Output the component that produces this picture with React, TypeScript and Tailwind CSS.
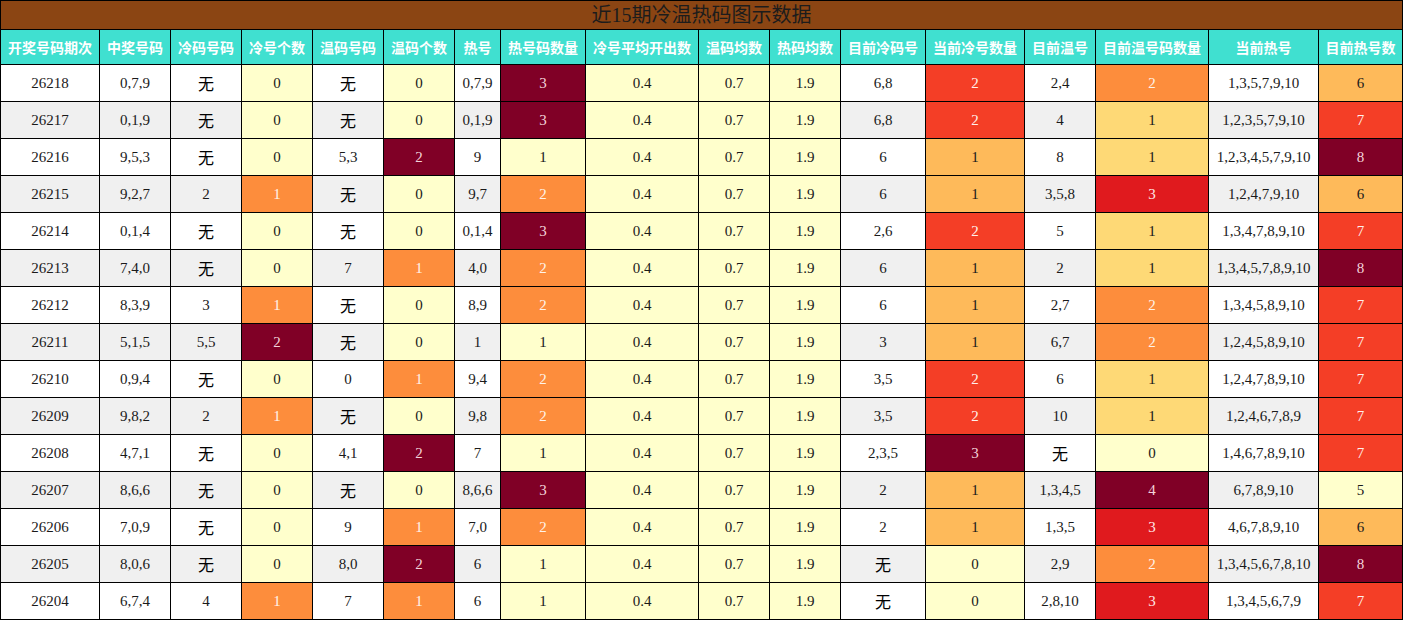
import React from 'react';

// 近15期冷温热码图示数据 — heat table

type Row = {
  issue: string;
  win: string;
  cold: string;
  coldCnt: number;
  warm: string;
  warmCnt: number;
  hot: string;
  hotCnt: number;
  curCold: string;
  curColdCnt: number;
  curWarm: string;
  curWarmCnt: number;
  curHot: string;
  curHotCnt: number;
};

const rows: Row[] = [
  { issue: '26218', win: '0,7,9', cold: '无', coldCnt: 0, warm: '无', warmCnt: 0, hot: '0,7,9', hotCnt: 3, curCold: '6,8', curColdCnt: 2, curWarm: '2,4', curWarmCnt: 2, curHot: '1,3,5,7,9,10', curHotCnt: 6 },
  { issue: '26217', win: '0,1,9', cold: '无', coldCnt: 0, warm: '无', warmCnt: 0, hot: '0,1,9', hotCnt: 3, curCold: '6,8', curColdCnt: 2, curWarm: '4', curWarmCnt: 1, curHot: '1,2,3,5,7,9,10', curHotCnt: 7 },
  { issue: '26216', win: '9,5,3', cold: '无', coldCnt: 0, warm: '5,3', warmCnt: 2, hot: '9', hotCnt: 1, curCold: '6', curColdCnt: 1, curWarm: '8', curWarmCnt: 1, curHot: '1,2,3,4,5,7,9,10', curHotCnt: 8 },
  { issue: '26215', win: '9,2,7', cold: '2', coldCnt: 1, warm: '无', warmCnt: 0, hot: '9,7', hotCnt: 2, curCold: '6', curColdCnt: 1, curWarm: '3,5,8', curWarmCnt: 3, curHot: '1,2,4,7,9,10', curHotCnt: 6 },
  { issue: '26214', win: '0,1,4', cold: '无', coldCnt: 0, warm: '无', warmCnt: 0, hot: '0,1,4', hotCnt: 3, curCold: '2,6', curColdCnt: 2, curWarm: '5', curWarmCnt: 1, curHot: '1,3,4,7,8,9,10', curHotCnt: 7 },
  { issue: '26213', win: '7,4,0', cold: '无', coldCnt: 0, warm: '7', warmCnt: 1, hot: '4,0', hotCnt: 2, curCold: '6', curColdCnt: 1, curWarm: '2', curWarmCnt: 1, curHot: '1,3,4,5,7,8,9,10', curHotCnt: 8 },
  { issue: '26212', win: '8,3,9', cold: '3', coldCnt: 1, warm: '无', warmCnt: 0, hot: '8,9', hotCnt: 2, curCold: '6', curColdCnt: 1, curWarm: '2,7', curWarmCnt: 2, curHot: '1,3,4,5,8,9,10', curHotCnt: 7 },
  { issue: '26211', win: '5,1,5', cold: '5,5', coldCnt: 2, warm: '无', warmCnt: 0, hot: '1', hotCnt: 1, curCold: '3', curColdCnt: 1, curWarm: '6,7', curWarmCnt: 2, curHot: '1,2,4,5,8,9,10', curHotCnt: 7 },
  { issue: '26210', win: '0,9,4', cold: '无', coldCnt: 0, warm: '0', warmCnt: 1, hot: '9,4', hotCnt: 2, curCold: '3,5', curColdCnt: 2, curWarm: '6', curWarmCnt: 1, curHot: '1,2,4,7,8,9,10', curHotCnt: 7 },
  { issue: '26209', win: '9,8,2', cold: '2', coldCnt: 1, warm: '无', warmCnt: 0, hot: '9,8', hotCnt: 2, curCold: '3,5', curColdCnt: 2, curWarm: '10', curWarmCnt: 1, curHot: '1,2,4,6,7,8,9', curHotCnt: 7 },
  { issue: '26208', win: '4,7,1', cold: '无', coldCnt: 0, warm: '4,1', warmCnt: 2, hot: '7', hotCnt: 1, curCold: '2,3,5', curColdCnt: 3, curWarm: '无', curWarmCnt: 0, curHot: '1,4,6,7,8,9,10', curHotCnt: 7 },
  { issue: '26207', win: '8,6,6', cold: '无', coldCnt: 0, warm: '无', warmCnt: 0, hot: '8,6,6', hotCnt: 3, curCold: '2', curColdCnt: 1, curWarm: '1,3,4,5', curWarmCnt: 4, curHot: '6,7,8,9,10', curHotCnt: 5 },
  { issue: '26206', win: '7,0,9', cold: '无', coldCnt: 0, warm: '9', warmCnt: 1, hot: '7,0', hotCnt: 2, curCold: '2', curColdCnt: 1, curWarm: '1,3,5', curWarmCnt: 3, curHot: '4,6,7,8,9,10', curHotCnt: 6 },
  { issue: '26205', win: '8,0,6', cold: '无', coldCnt: 0, warm: '8,0', warmCnt: 2, hot: '6', hotCnt: 1, curCold: '无', curColdCnt: 0, curWarm: '2,9', curWarmCnt: 2, curHot: '1,3,4,5,6,7,8,10', curHotCnt: 8 },
  { issue: '26204', win: '6,7,4', cold: '4', coldCnt: 1, warm: '7', warmCnt: 1, hot: '6', hotCnt: 1, curCold: '无', curColdCnt: 0, curWarm: '2,8,10', curWarmCnt: 3, curHot: '1,3,4,5,6,7,9', curHotCnt: 7 },
];

const headers = ['开奖号码期次', '中奖号码', '冷码号码', '冷号个数', '温码号码', '温码个数', '热号', '热号码数量', '冷号平均开出数', '温码均数', '热码均数', '目前冷码号', '当前冷号数量', '目前温号', '目前温号码数量', '当前热号', '目前热号数'];
const widths = [99, 71, 71, 71, 71, 71, 46, 85, 113, 71, 71, 85, 99, 71, 113, 110, 84];

// heat classes, YlOrRd-ish
const heat = {
  y0: 'bg-[#ffffcc] text-[#1a1a1a]',
  y1: 'bg-[#fed976] text-[#1a1a1a]',
  y2: 'bg-[#feba5a] text-[#1a1a1a]',
  o: 'bg-[#fd8d3c] text-[#fff3ea]',
  r1: 'bg-[#f43e26] text-[#fff0ec]',
  r2: 'bg-[#e01a1e] text-[#ffe8e8]',
  m: 'bg-[#800026] text-[#f3d3da]',
};

const smallCnt = (n: number) => (n === 0 ? heat.y0 : n === 1 ? heat.o : heat.m);
const hotCnt = (n: number) => (n === 1 ? heat.y0 : n === 2 ? heat.o : heat.m);
const curColdCnt = (n: number) => (n === 0 ? heat.y0 : n === 1 ? heat.y2 : n === 2 ? heat.r1 : heat.m);
const curWarmCnt = (n: number) => (n === 0 ? heat.y0 : n === 1 ? heat.y1 : n === 2 ? heat.o : n === 3 ? heat.r2 : heat.m);
const curHotCnt = (n: number) => (n <= 5 ? heat.y0 : n === 6 ? heat.y2 : n === 7 ? heat.r1 : heat.m);

function Cell({ value, className = '' }: { value: string | number; className?: string }) {
  const isNone = value === '无';
  return (
    <td
      className={`border border-black p-0 text-center align-middle whitespace-nowrap ${
        isNone ? 'text-[16px] font-["Noto_Sans_CJK_SC",sans-serif] text-black' : 'text-[15px]'
      } ${className}`}
    >
      {value}
    </td>
  );
}

export default function App() {
  return (
    <div className="w-[1404px] h-[620px] bg-white overflow-hidden">
      <table
        className="w-[1403px] table-fixed border-collapse text-[#1a1a1a]"
        style={{ fontFamily: '"Liberation Serif", "Noto Sans CJK SC", serif' }}
      >
        <colgroup>
          {widths.map((w, i) => (
            <col key={i} style={{ width: w }} />
          ))}
        </colgroup>
        <thead>
          <tr className="h-[29px]">
            <th colSpan={17} className="border border-black bg-[#8b4513] p-0 text-center text-[20px] font-normal text-[#1c1c1c] leading-none">
              近15期冷温热码图示数据
            </th>
          </tr>
          <tr className="h-[35px]">
            {headers.map((h) => (
              <th
                key={h}
                className="border border-black bg-[#40e0d0] p-0 text-center text-[14px] font-bold text-white whitespace-nowrap font-['Noto_Sans_CJK_SC',sans-serif]"
              >
                {h}
              </th>
            ))}
          </tr>
        </thead>
        <tbody>
          {rows.map((r, i) => {
            const base = i % 2 === 1 ? 'bg-[#f0f0f0]' : 'bg-white';
            return (
              <tr key={r.issue} className={`h-[37px] ${base}`}>
                <Cell value={r.issue} />
                <Cell value={r.win} />
                <Cell value={r.cold} />
                <Cell value={r.coldCnt} className={smallCnt(r.coldCnt)} />
                <Cell value={r.warm} />
                <Cell value={r.warmCnt} className={smallCnt(r.warmCnt)} />
                <Cell value={r.hot} />
                <Cell value={r.hotCnt} className={hotCnt(r.hotCnt)} />
                <Cell value="0.4" className={heat.y0} />
                <Cell value="0.7" className={heat.y0} />
                <Cell value="1.9" className={heat.y0} />
                <Cell value={r.curCold} />
                <Cell value={r.curColdCnt} className={curColdCnt(r.curColdCnt)} />
                <Cell value={r.curWarm} />
                <Cell value={r.curWarmCnt} className={curWarmCnt(r.curWarmCnt)} />
                <Cell value={r.curHot} />
                <Cell value={r.curHotCnt} className={curHotCnt(r.curHotCnt)} />
              </tr>
            );
          })}
        </tbody>
      </table>
    </div>
  );
}
